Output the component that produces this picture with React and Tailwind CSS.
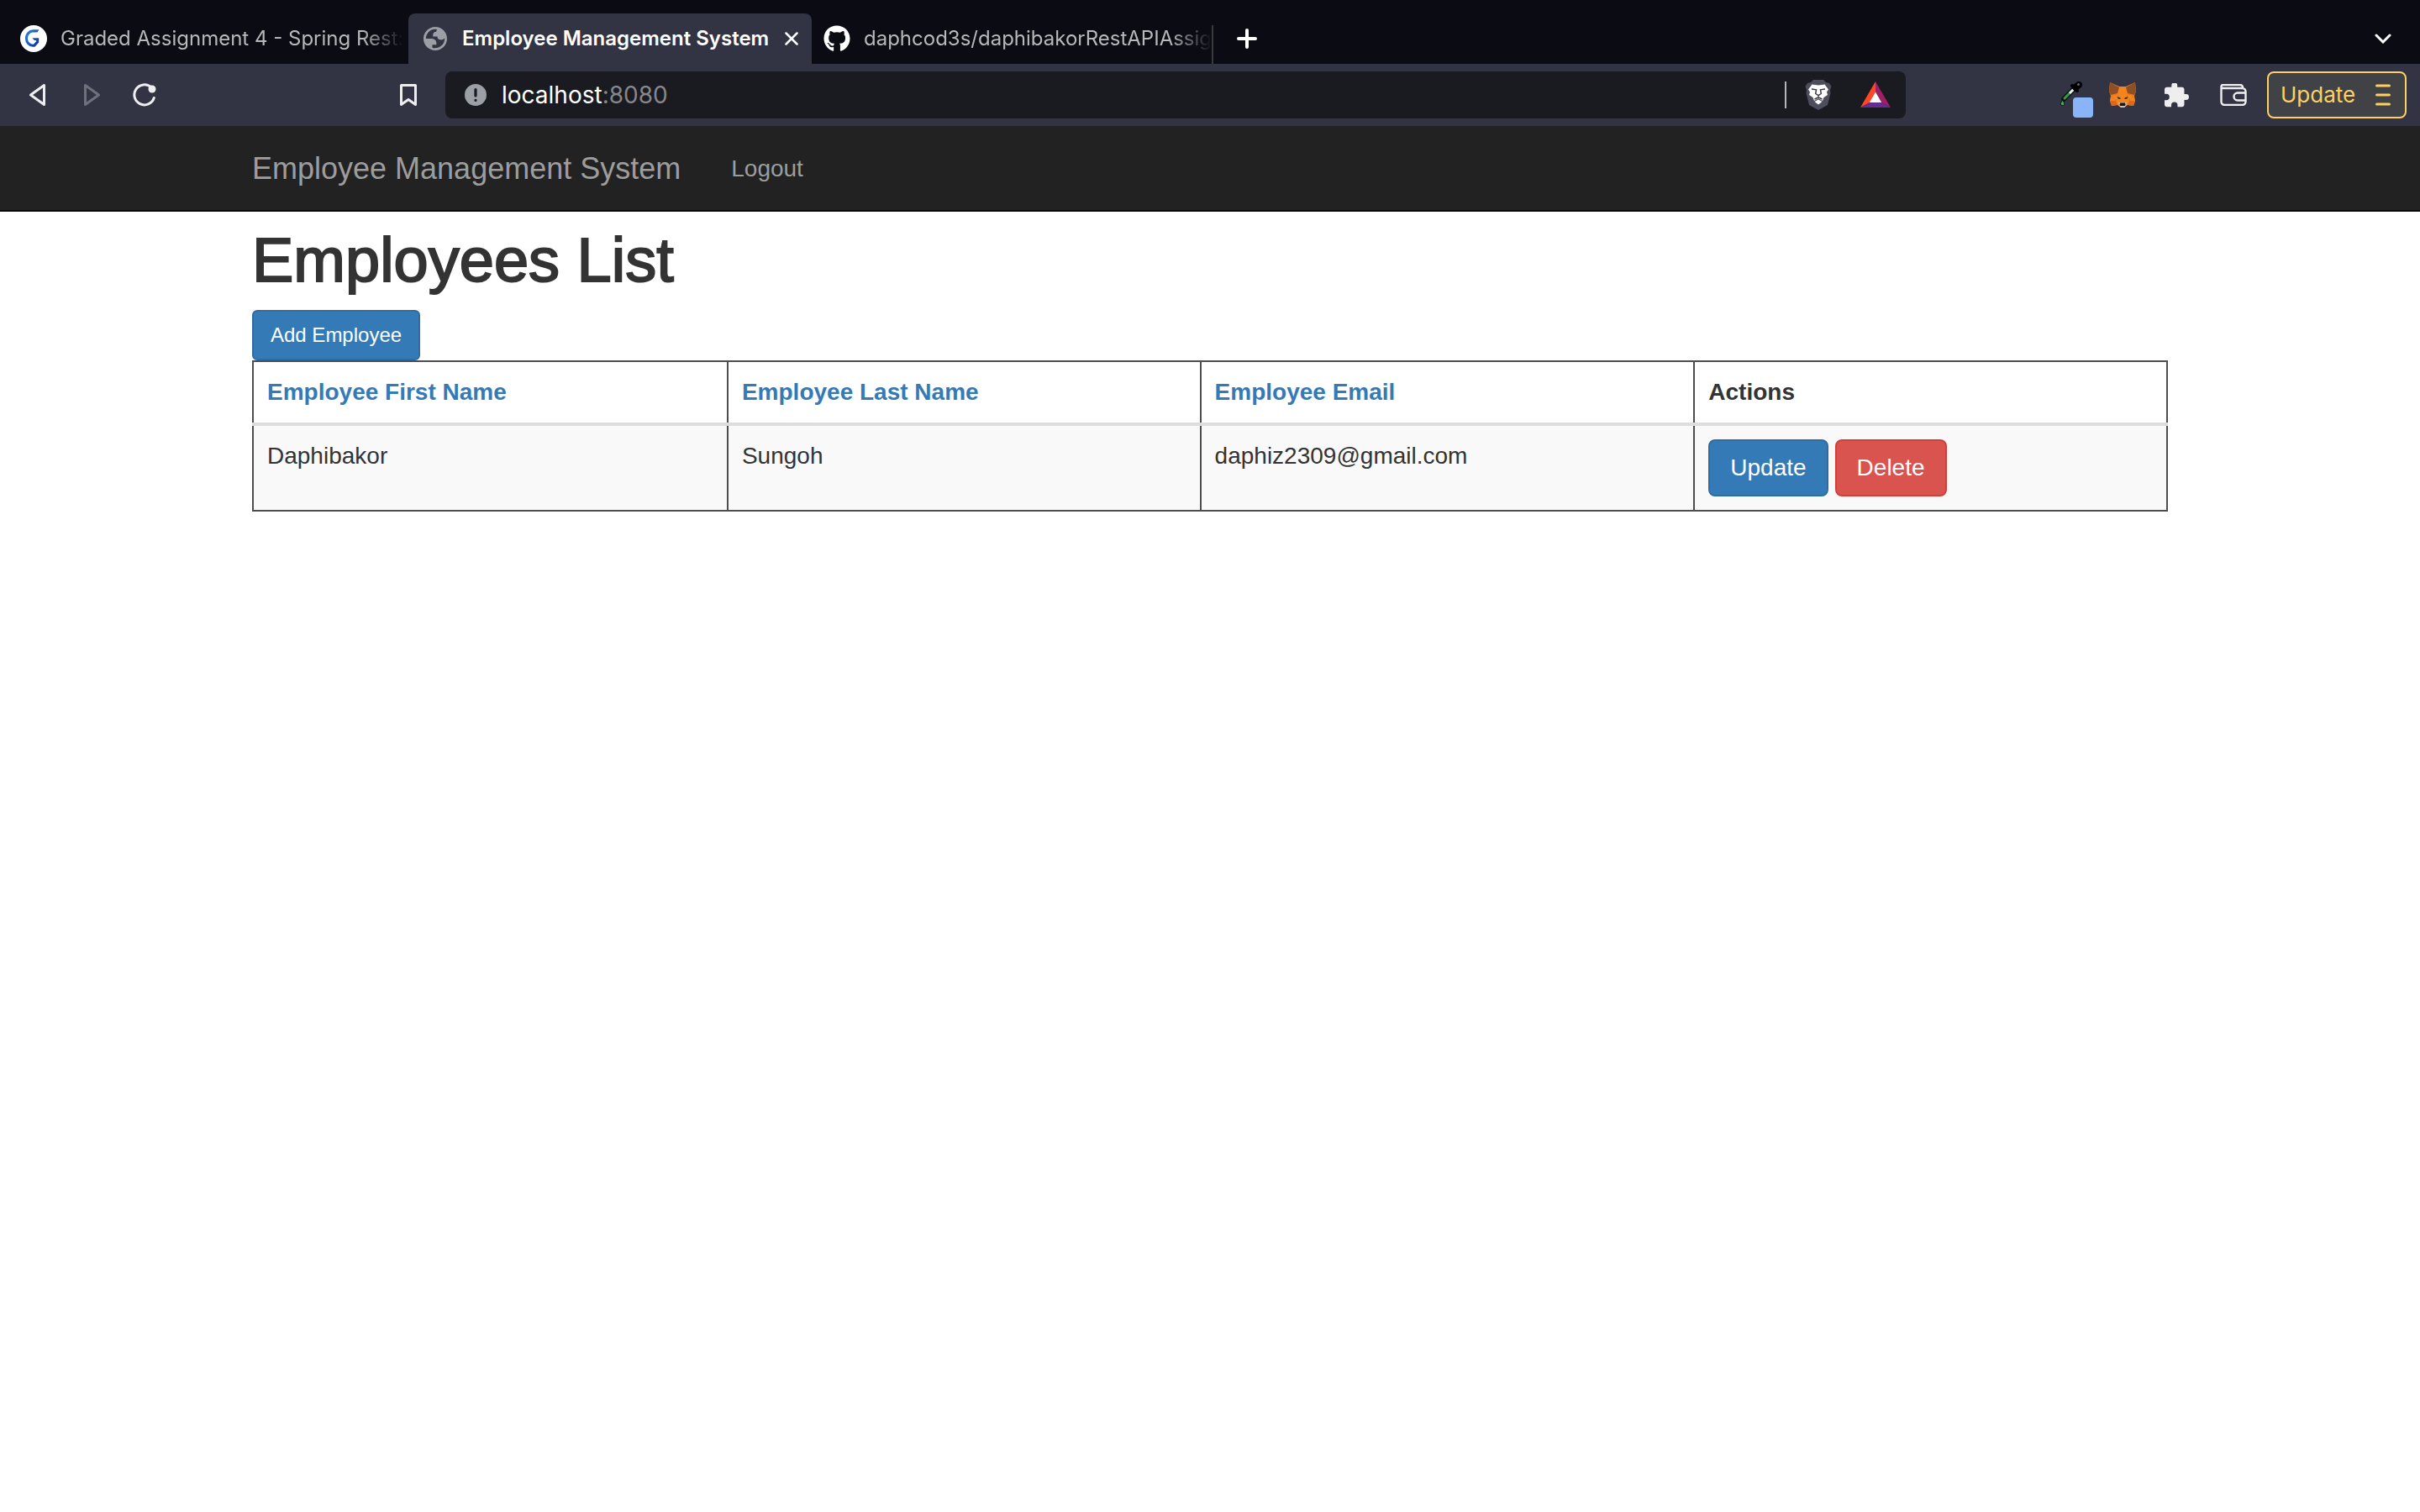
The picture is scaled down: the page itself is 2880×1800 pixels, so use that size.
import { FaGithub } from "react-icons/fa";

function GLogo() {
  return (
    <svg viewBox="0 0 32 32" className="size-8 shrink-0" aria-hidden="true">
      <defs>
        <linearGradient id="g" x1="0" y1="0" x2="1" y2="1">
          <stop offset="0" stopColor="#2a8be6" />
          <stop offset="1" stopColor="#0b2d9a" />
        </linearGradient>
      </defs>
      <circle cx="16" cy="16" r="16" fill="#fff" />
      <path d="M22.500 5.300H15.500A9.300 9.800 0 0 0 6 16a9.500 9.600 0 0 0 9 9.800h2.500l4.700-5.300V15.200H14.500l2.300 2.700h2.300v1.300l-3 3.400A6.300 6.600 0 0 1 9 16a6.500 6.900 0 0 1 6.500-7.500h4.800z" fill="url(#g)" />
    </svg>
  );
}

function Globe() {
  return (
    <svg viewBox="2 2 20 20" className="size-7 shrink-0" aria-hidden="true">
      <path
        fill="#9aa0a6"
        fillRule="evenodd"
        d="M12 2C6.480 2 2 6.480 2 12s4.480 10 10 10 10-4.480 10-10S17.520 2 12 2zM4 12h4.400c3.407.022 4.922 1.730 4.543 5.127H9.488v2.470a8.004 8.004 0 0 0 10.498-8.083C19.327 12.504 18.332 13 17 13c-2.137 0-3.206-.916-3.206-2.750h-3.748c-.274-2.728.683-4.092 2.870-4.092 0-.975.327-1.597.811-1.970A8.004 8.004 0 0 0 4 12z"
      />
    </svg>
  );
}

function Fox() {
  return (
    <svg viewBox="0 0 32 30" className="h-[30px] w-8" aria-hidden="true">
      <path fill="#f5841f" d="M1 0l11 5h8l11-5 1 11-2 5 1 6-2 6-7-1-4 3h-4l-4-3-7 1-2-6 1-6-2-5z" />
      <path fill="#8f4f26" d="M1 0l11 6-2 7-8 2-2-4zM31 0L20 6l2 7 8 2 2-4z" />
      <path fill="#d96a1c" d="M1 22h7l2 5-7 1zM31 22h-7l-2 5 7 1zM2 16l8-3 1 4-3 5zM30 16l-8-3-1 4 3 5z" />
      <path fill="#f5841f" d="M3 16l7-2 1 5-4 2zM29 16l-7-2-1 5 4 2z" />
      <path fill="#24343f" d="M9.500 17l4 1.500v1.500l-3-.5zM22.500 17l-4 1.500v1.500l3-.5z" />
      <path fill="#d5bfb2" d="M11 24h10l-1 4-2 2h-4l-2-2z" />
      <path fill="#161616" d="M13 24.500h6l.5 2.500-1 1h-5l-1-1z" />
    </svg>
  );
}

function Dropper() {
  return (
    <svg viewBox="0 0 40 44" className="h-11 w-10" aria-hidden="true">
      <path d="M4 21L18 7" stroke="#111" strokeWidth="6" strokeLinecap="round" />
      <path d="M5 20l6-6" stroke="#2f9e4f" strokeWidth="3" strokeLinecap="round" />
      <path d="M11 14l6-6" stroke="#e8f3ea" strokeWidth="3" />
      <path d="M14 5l6 6" stroke="#000" strokeWidth="4" strokeLinecap="round" />
      <path d="M18 7l4-3" stroke="#000" strokeWidth="8" strokeLinecap="round" />
      <circle cx="21.500" cy="3.500" r="1.500" fill="#666" />
      <path d="M2.500 22c2 3 2.500 4 2 5.500a2.400 2.400 0 0 1-4.300-.5c-.2-1.500 1.300-2.500 2.300-5z" fill="#3fae5c" stroke="#111" strokeWidth="1" />
      <rect x="15" y="19" width="24" height="24" rx="4" fill="#8ab4f8" />
    </svg>
  );
}

function Puzzle() {
  return (
    <svg viewBox="2 1.500 21 21" className="size-[29px]" aria-hidden="true">
      <path fill="#eee" d="M20.500 11H19V7c0-1.100-.9-2-2-2h-4V3.500a2.500 2.500 0 0 0-5 0V5H4c-1.100 0-2 .9-2 2v3.800h1.500a2.700 2.700 0 0 1 0 5.400H2V20c0 1.100.9 2 2 2h3.800v-1.500a2.700 2.700 0 0 1 5.400 0V22H17c1.100 0 2-.9 2-2v-4h1.500a2.500 2.500 0 0 0 0-5z" />
    </svg>
  );
}

function Wallet() {
  return (
    <svg viewBox="0 0 32 26" className="h-[26px] w-8" fill="none" stroke="#eee" strokeWidth="2.400" aria-hidden="true">
      <path d="M1.500 3v18a4 4 0 0 0 4 4h21a4 4 0 0 0 4-4V9a4 4 0 0 0-4-4H3.500a2 2 0 0 1-2-2 2 2 0 0 1 2-2H24a3 3 0 0 1 3 3v1" />
      <path d="M30 10.500h-9a4.500 4.500 0 0 0 0 9h9" />
    </svg>
  );
}

function Bat() {
  return (
    <svg viewBox="0 0 36 32" className="h-8 w-9" aria-hidden="true">
      <path fill="#ff4724" d="M18 0L0 31l11-6 7-12z" />
      <path fill="#9e1f63" d="M18 0l18 31-11-6-7-12z" />
      <path fill="#662d91" d="M0 31l11-6h14l11 6z" />
      <path fill="#fff" d="M18 12.500L10.800 25h14.400z" />
    </svg>
  );
}

function BraveShield() {
  return (
    <svg viewBox="0 0 32 36" className="h-9 w-8" aria-hidden="true">
      <path fill="#4c4e5e" d="M10 0h12l3 3 4 1 2.500 4-1.500 4 .5 4-3.500 14-11 6-11-6-3.500-14 .5-4L.5 8 3 4l4-1z" />
      <path fill="#fff" d="M8.500 5.500l7.500 1 7.500-1 4.500 6-2 3 1 3.500-4.500 3-1.500 4-5-3-5 3-1.500-4L5 18l1-3.500-2-3z" />
      <path fill="#fff" d="M16 23.500l4.500 2.500-4.500 3.500-4.500-3.500z" />
      <path fill="none" stroke="#3b3d4b" strokeWidth="1.500" d="M8 11l5.500.8-.8 4.700 3.300 2.200 3.300-2.200-.8-4.700L24 11M16 18.700v2.300M11.500 23l4.500-2.200 4.500 2.200" />
    </svg>
  );
}

function Tab({ icon, children, className }) {
  return (
    <button type="button" role="tab" className={className}>
      {icon}
      <span className="flex-1 whitespace-nowrap text-left mask-r-from-[88%]">{children}</span>
    </button>
  );
}

function TabStrip() {
  return (
    <div className="flex h-[76px] items-end bg-[#0b0b14] pt-4 text-[24px] leading-8 text-[#b8b8ba]">
      <div role="tablist" className="flex h-[60px]">
        <Tab icon={<GLogo />} className="flex w-[486px] items-center gap-4 pr-2 pl-6">
          Graded Assignment 4 - Spring Rest:
        </Tab>
        <div className="flex w-[480px] items-center rounded-t-lg bg-[#323443] pr-4 pl-[18px] text-white">
          <button type="button" role="tab" aria-selected="true" className="flex flex-1 items-center gap-[18px] font-semibold whitespace-nowrap">
            <Globe />
            Employee Management System
          </button>
          <button type="button" aria-label="Close tab">
            <svg viewBox="0 0 16 16" className="size-4" stroke="#fff" strokeWidth="2.500" strokeLinecap="round">
              <path d="M1.500 1.500l13 13M14.500 1.500l-13 13" />
            </svg>
          </button>
        </div>
        <Tab icon={<FaGithub className="size-8 shrink-0 text-white" />} className="flex w-[476px] items-center gap-4 pr-2 pl-[14px]">
          daphcod3s/daphibakorRestAPIAssig
        </Tab>
      </div>
      <div className="h-[46px] w-[2px] bg-[#3a3a3c]" />
      <button type="button" aria-label="New tab" className="flex h-[60px] items-center pl-7">
        <svg viewBox="0 0 24 24" className="size-6" stroke="#fff" strokeWidth="4" strokeLinecap="round">
          <path d="M2 12h20M12 2v20" />
        </svg>
      </button>
      <button type="button" aria-label="Search tabs" className="ml-auto flex h-[60px] items-center pr-[34px]">
        <svg viewBox="0 0 20 12" className="h-3 w-5" fill="none" stroke="#fff" strokeWidth="3" strokeLinecap="round">
          <path d="M2 2l8 8 8-8" />
        </svg>
      </button>
    </div>
  );
}

function Toolbar() {
  return (
    <div className="flex h-[74px] items-center bg-[#323443] pr-4 pl-[34px]">
      <div className="flex w-[496px] items-center pr-[33px]">
        <button type="button" aria-label="Back">
          <svg viewBox="0 0 22 28" className="h-7 w-[22px]" fill="none" stroke="#eee" strokeWidth="3" strokeLinejoin="round">
            <path d="M18.500 2.500v23L2.500 14z" />
          </svg>
        </button>
        <button type="button" aria-label="Forward" className="ml-[42px]">
          <svg viewBox="0 0 22 28" className="h-7 w-[22px]" fill="none" stroke="#6e707b" strokeWidth="3" strokeLinejoin="round">
            <path d="M3.500 2.500v23L19.500 14z" />
          </svg>
        </button>
        <button type="button" aria-label="Reload" className="ml-[38px]">
          <svg viewBox="0 0 28 28" className="size-7" fill="none" stroke="#eee" strokeWidth="3" strokeLinecap="round">
            <path d="M25.300 17.500A12 12 0 1 1 22 5" />
            <circle cx="23" cy="7" r="4.500" fill="#eee" stroke="none" />
          </svg>
        </button>
        <button type="button" aria-label="Bookmark this page" className="ml-auto">
          <svg viewBox="0 0 22 28" className="h-7 w-[22px]" fill="none" stroke="#eee" strokeWidth="3" strokeLinejoin="round">
            <path d="M2.500 2.500h17V25.500L11 19.500l-8.500 6z" />
          </svg>
        </button>
      </div>
      <div className="flex h-14 w-[1738px] shrink items-center rounded-lg bg-[#1a1b20] pr-[18px] pl-[23px]">
        <svg viewBox="0 0 26 26" className="size-[26px]" aria-hidden="true">
          <circle cx="13" cy="13" r="13" fill="#9aa0a6" />
          <path d="M13 6.500v7.500M13 19.300v.2" stroke="#1a1b20" strokeWidth="3.200" strokeLinecap="round" />
        </svg>
        <a href="#address" className="ml-[18px] flex-1 text-[28px] leading-8 text-white">
          localhost<span className="text-[#86878b]">:8080</span>
        </a>
        <div className="h-8 w-[2px] bg-[#b4b5b8]" />
        <button type="button" aria-label="Brave Shields" className="ml-[22px]"><BraveShield /></button>
        <button type="button" aria-label="Brave Rewards" className="ml-[34px]"><Bat /></button>
      </div>
      <div className="ml-auto flex items-center">
        <button type="button" aria-label="Color picker" className="pt-3"><Dropper /></button>
        <button type="button" aria-label="MetaMask" className="ml-[18px]"><Fox /></button>
        <button type="button" aria-label="Extensions" className="ml-[34px]"><Puzzle /></button>
        <button type="button" aria-label="Wallet" className="ml-[37px]"><Wallet /></button>
        <button type="button" className="ml-6 flex h-14 w-[166px] items-center justify-between rounded-lg border-2 border-[#ffd061] bg-[#414246] pr-[17px] pl-[14px] text-[26px] leading-8 text-[#ffd061]">
          Update
          <svg viewBox="0 0 18 26" className="h-[26px] w-[18px]" stroke="#ffd061" strokeWidth="3" strokeLinecap="round" aria-hidden="true">
            <path d="M1.500 2h15M1.500 13h15M1.500 24h15" />
          </svg>
        </button>
      </div>
    </div>
  );
}

const employees = [{ first: "Daphibakor", last: "Sungoh", email: "daphiz2309@gmail.com" }];

const headCell = "border-2 border-b-4 border-[#4d4d4d] border-b-[#ddd] p-4";
const bodyCell = "border-2 border-[#4d4d4d] p-4";

export default function App() {
  return (
    <div className="min-h-screen bg-white font-['Liberation_Sans',Arial,sans-serif] text-[28px] leading-10 text-[#333]">
      <header className="font-[Inter,sans-serif]">
        <TabStrip />
        <Toolbar />
      </header>
      <nav className="border-b-2 border-[#080808] bg-[#222] text-[#9d9d9d]">
        <div className="mx-auto flex h-[100px] max-w-[2280px] items-center gap-[60px] pt-[2px]">
          <a href="#home" className="text-[36px]">Employee Management System</a>
          <a href="#logout">Logout</a>
        </div>
      </nav>
      <main className="mx-auto max-w-[2280px] pt-[18px]">
        <h1 className="pb-[19px] text-[74px] leading-[80px] [-webkit-text-stroke:2px_#333]">Employees List</h1>
        <a href="#add" className="block w-fit rounded-md border-2 border-[#2e6da4] bg-[#337ab7] px-5 py-[10px] text-[24px] leading-9 text-white">
          Add Employee
        </a>
        <table className="w-full table-fixed border-collapse">
          <colgroup>
            <col className="w-[24.8%]" />
            <col className="w-[24.7%]" />
            <col className="w-[25.8%]" />
            <col className="w-[24.7%]" />
          </colgroup>
          <thead>
            <tr className="text-left">
              <th scope="col" className={headCell}><a href="#first" className="text-[#337ab7]">Employee First Name</a></th>
              <th scope="col" className={headCell}><a href="#last" className="text-[#337ab7]">Employee Last Name</a></th>
              <th scope="col" className={headCell}><a href="#email" className="text-[#337ab7]">Employee Email</a></th>
              <th scope="col" className={headCell}>Actions</th>
            </tr>
          </thead>
          <tbody>
            {employees.map((e) => (
              <tr key={e.email} className="bg-[#f9f9f9] align-top">
                <td className={bodyCell}>{e.first}</td>
                <td className={bodyCell}>{e.last}</td>
                <td className={bodyCell}>{e.email}</td>
                <td className={bodyCell}>
                  <div className="flex gap-2">
                    <a href="#update" className="rounded-lg border-2 border-[#2e6da4] bg-[#337ab7] px-6 py-3 text-white">Update</a>
                    <a href="#delete" className="rounded-lg border-2 border-[#d43f3a] bg-[#d9534f] px-6 py-3 text-white">Delete</a>
                  </div>
                </td>
              </tr>
            ))}
          </tbody>
        </table>
      </main>
    </div>
  );
}
